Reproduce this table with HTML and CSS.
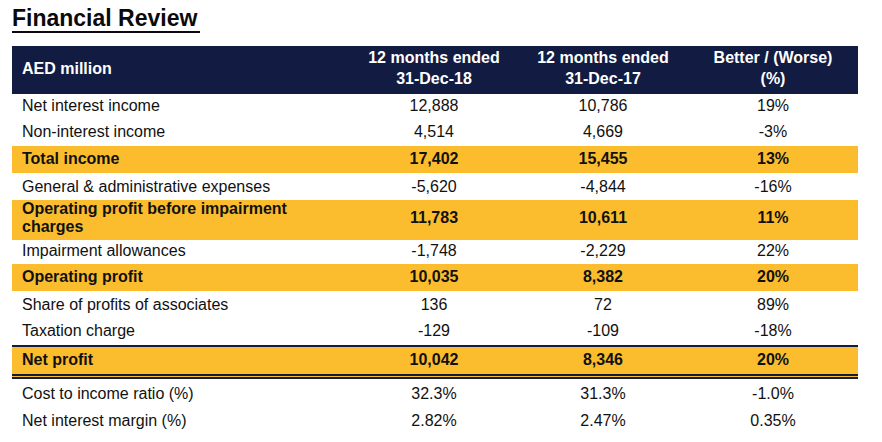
FILE: index.html
```html
<!DOCTYPE html>
<html>
<head>
<meta charset="utf-8">
<link rel="stylesheet" href="styles.css">
</head>
<body>
<div class="page">
  <h1 class="title">Financial Review</h1>
  <table class="fin">
    <thead>
      <tr>
        <th class="label">AED million</th>
        <th>12 months ended<br>31-Dec-18</th>
        <th>12 months ended<br>31-Dec-17</th>
        <th>Better / (Worse)<br>(%)</th>
      </tr>
    </thead>
    <tbody>
      <tr class="first"><td class="label">Net interest income</td><td>12,888</td><td>10,786</td><td>19%</td></tr>
      <tr class="up"><td class="label">Non-interest income</td><td>4,514</td><td>4,669</td><td>-3%</td></tr>
      <tr class="hl up"><td class="label">Total income</td><td>17,402</td><td>15,455</td><td>13%</td></tr>
      <tr><td class="label">General &amp; administrative expenses</td><td>-5,620</td><td>-4,844</td><td>-16%</td></tr>
      <tr class="hl two"><td class="label">Operating profit before impairment<br>charges</td><td>11,783</td><td>10,611</td><td>11%</td></tr>
      <tr class="short up"><td class="label">Impairment allowances</td><td>-1,748</td><td>-2,229</td><td>22%</td></tr>
      <tr class="hl up"><td class="label">Operating profit</td><td>10,035</td><td>8,382</td><td>20%</td></tr>
      <tr><td class="label">Share of profits of associates</td><td>136</td><td>72</td><td>89%</td></tr>
      <tr class="up"><td class="label">Taxation charge</td><td>-129</td><td>-109</td><td>-18%</td></tr>
      <tr class="hl net up"><td class="label">Net profit</td><td>10,042</td><td>8,346</td><td>20%</td></tr>
      <tr class="ratio"><td class="label">Cost to income ratio (%)</td><td>32.3%</td><td>31.3%</td><td>-1.0%</td></tr>
      <tr class="ratio"><td class="label">Net interest margin (%)</td><td>2.82%</td><td>2.47%</td><td>0.35%</td></tr>
    </tbody>
  </table>
</div>
</body>
</html>
```
FILE: styles.css
```css
html, body {
  margin: 0;
  padding: 0;
  background: #ffffff;
}

.page {
  padding: 6px 12px 0 12px;
  font-family: "Liberation Sans", Arial, sans-serif;
  color: #111111;
}

.title {
  display: inline-block;
  margin: 0;
  padding-right: 3px;
  font-size: 23px;
  line-height: 25px;
  font-weight: bold;
  color: #0a0a0a;
  border-bottom: 2px solid #0a0a0a;
}

.fin {
  margin-top: 13px;
  width: 846px;
  border-collapse: collapse;
  font-size: 16px;
  table-layout: fixed;
}

.fin th,
.fin td {
  padding-top: 1px;
  padding-bottom: 1px;
  padding-left: 0;
  padding-right: 0;
  text-align: center;
  vertical-align: middle;
}

.fin th.label,
.fin td.label {
  text-align: left;
  padding-left: 10px;
  width: 328px;
}

.fin th {
  background: #121c42;
  color: #ffffff;
  font-weight: bold;
  height: 44px;
  padding-top: 0;
  padding-bottom: 4px;
  line-height: 21px;
}

.fin th:nth-child(2) { width: 168px; }
.fin th:nth-child(3) { width: 170px; }
.fin th:nth-child(4) { width: 170px; }

.fin td {
  height: 25px;
  line-height: 18px;
}

.fin tr.first td {
  height: 23px;
  padding-top: 0;
  padding-bottom: 2px;
}

.fin tr.up td {
  padding-top: 0;
  padding-bottom: 2px;
}

.fin tr.short td {
  height: 22px;
}

.fin tr.hl td {
  background: #fbbd2e;
  font-weight: bold;
}

.fin tr.two td {
  height: 35px;
  padding-top: 0;
  padding-bottom: 4px;
  line-height: 18px;
}

.fin tr.net td {
  border-top: 2px solid #121c42;
  border-bottom: 5px double #121c42;
}

.fin tr.ratio td {
  height: 24px;
  padding-top: 3px;
  padding-bottom: 0;
}
```
